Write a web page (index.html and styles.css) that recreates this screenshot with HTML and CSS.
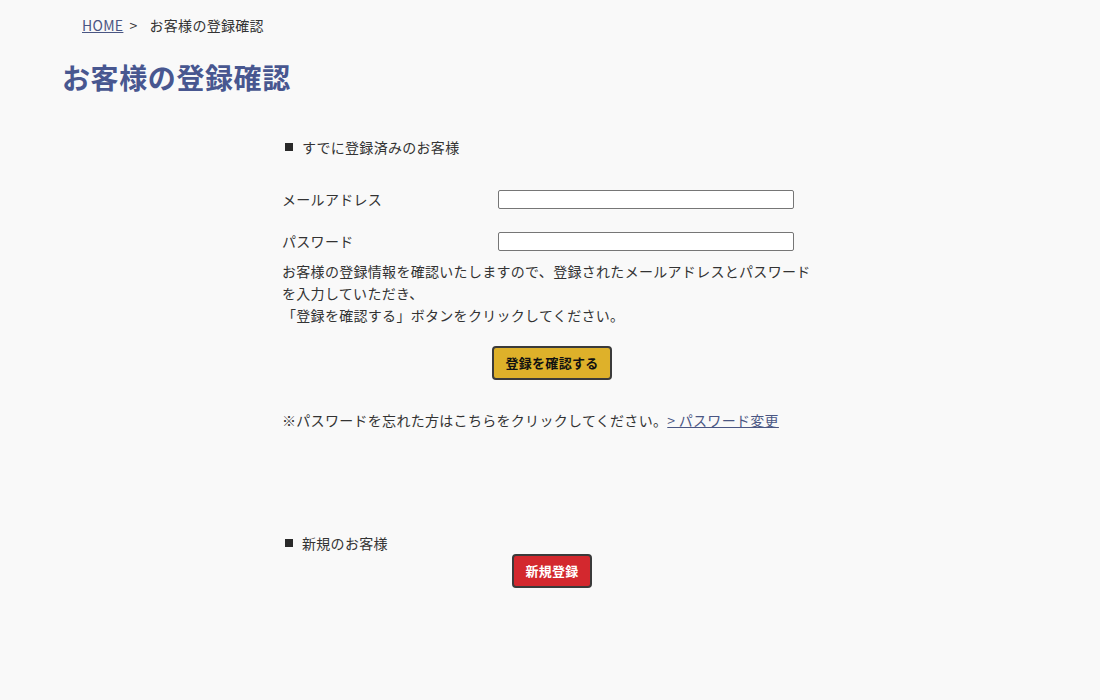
FILE: index.html
```html
<!DOCTYPE html>
<html lang="ja">
<head>
<meta charset="utf-8">
<title>お客様の登録確認</title>
<link rel="stylesheet" href="styles.css">
</head>
<body>
<nav class="breadcrumb"><a href="#" class="crumb-link">HOME</a><span class="sep">&gt;</span><span>お客様の登録確認</span></nav>
<h1 class="page-title">お客様の登録確認</h1>
<main class="main">
  <section class="block">
    <h2 class="block-title"><span class="sq"></span>すでに登録済みのお客様</h2>
    <form class="login-form">
      <div class="row"><label class="label">メールアドレス</label><input class="field" type="text"></div>
      <div class="row row-last"><label class="label">パスワード</label><input class="field" type="password"></div>
      <p class="note">お客様の登録情報を確認いたしますので、登録されたメールアドレスとパスワードを入力していただき、<br>「登録を確認する」ボタンをクリックしてください。</p>
      <div class="btn-wrap"><button type="button" class="btn btn-gold">登録を確認する</button></div>
      <p class="forgot">※パスワードを忘れた方はこちらをクリックしてください。<a href="#" class="link">&gt; パスワード変更</a></p>
    </form>
  </section>
  <section class="block block-new">
    <h2 class="block-title"><span class="sq"></span>新規のお客様</h2>
    <div class="btn-wrap-new"><button type="button" class="btn btn-red">新規登録</button></div>
  </section>
</main>
</body>
</html>
```
FILE: styles.css
```css
* { box-sizing: border-box; }
body {
  margin: 0;
  background: #f9f9f9;
  color: #333;
  font-family: "Noto Sans CJK JP", "Noto Sans", sans-serif;
  font-size: 14px;
  letter-spacing: 0.3px;
}
.breadcrumb {
  padding: 16px 0 0 82px;
  line-height: 18px;
  font-size: 14px;
  color: #333;
}
.crumb-link { color: #4a5683; text-decoration: underline; }
.sep { margin: 0 12px 0 6px; }
.page-title {
  margin: 25px 0 0 62px;
  font-size: 28px;
  line-height: 36px;
  font-weight: bold;
  letter-spacing: 0.6px;
  color: #485790;
}
.main {
  margin-left: 282px;
  width: 540px;
}
.block-title {
  margin: 0;
  display: flex;
  align-items: center;
  font-size: 14px;
  line-height: 20px;
  font-weight: normal;
  color: #333;
}
.sq {
  width: 8px;
  height: 8px;
  background: #2a2a2a;
  margin: 0 9px 0 3px;
}
.block { padding-top: 42px; }
.login-form { padding-top: 33px; }
.row {
  display: flex;
  align-items: center;
  height: 19px;
  margin-bottom: 23px;
}
.row-last { margin-bottom: 0; }
.label {
  width: 216px;
  line-height: 19px;
}
.field {
  width: 296px;
  height: 19px;
  border: 1px solid #767676;
  border-radius: 2px;
  background: #fff;
  padding: 0 2px;
  font-size: 13px;
}
.note {
  margin: 9px 0 0;
  line-height: 22px;
}
.btn-wrap {
  display: flex;
  justify-content: center;
  margin-top: 20px;
}
.btn {
  height: 34px;
  padding: 0 11px;
  border: 2px solid #3b3b3b;
  border-radius: 4px;
  font-family: "Noto Sans CJK JP", sans-serif;
  font-size: 13px;
  font-weight: bold;
  line-height: 30px;
  letter-spacing: 0.3px;
  cursor: pointer;
}
.btn-gold { background: #deb12a; color: #111; }
.btn-red { background: #d3282e; color: #fff; }
.forgot {
  margin: 29px 0 0;
  line-height: 22px;
}
.link { color: #4a5683; text-decoration: underline; }
.block-new { padding-top: 102px; }
.btn-wrap-new {
  display: flex;
  justify-content: center;
  margin-top: 1px;
}
```
